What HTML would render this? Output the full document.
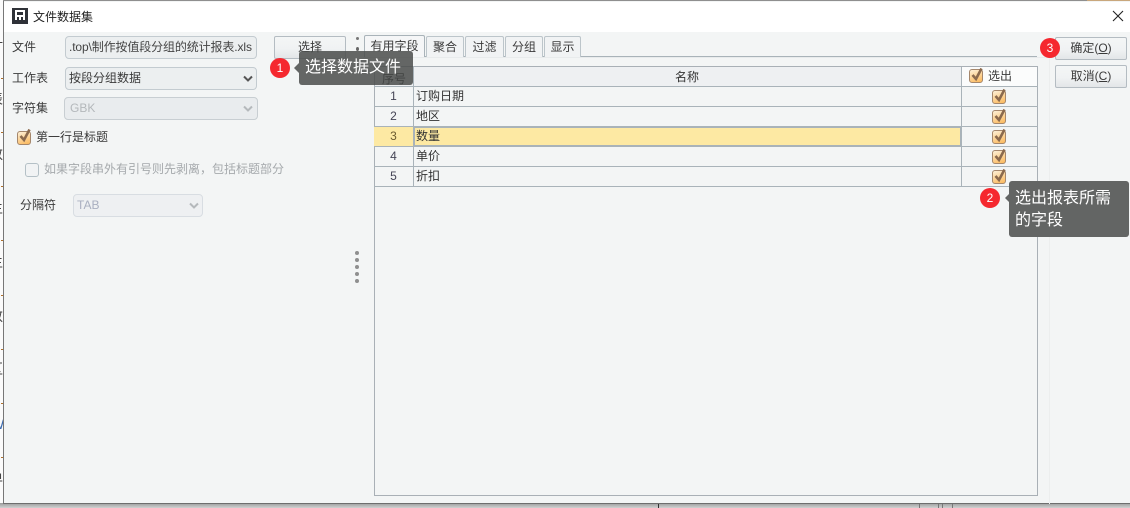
<!DOCTYPE html>
<html><head><meta charset="utf-8"><style>
*{box-sizing:border-box}
html,body{margin:0;padding:0;width:1130px;height:508px;overflow:hidden;background:#c9cbcb}
body{position:relative;font-family:"Liberation Sans","Noto Sans CJK SC",sans-serif;font-size:12px;color:#333}
.a{position:absolute;white-space:nowrap}
.lbl{font-size:12px;line-height:16px;color:#3a3a3a}
.in{position:absolute;border:1px solid #c3cbd0;border-radius:4px;background:#eceff0;height:23px;line-height:21px;padding-left:3px;font-size:12px;color:#3a3a3a;white-space:nowrap;overflow:hidden}
.dis{color:#b4b8bb;border-color:#d2d8dc;background:#eff1f2}
.btn{position:absolute;border:1px solid #b4bcc2;border-radius:2px;background:linear-gradient(#f4f6f6,#f0f2f3 55%,#e3e6e8);text-align:center;font-size:12px;color:#3a3a3a;line-height:20px}
.tab{position:absolute;top:36px;height:21px;border:1px solid #bcc5ca;border-bottom:0;border-radius:2px 2px 0 0;background:#f1f3f4;text-align:center;line-height:20px;font-size:12px;color:#3a3a3a}
.h{position:absolute;background:#a9b3b9;height:1px}
.v{position:absolute;background:#a9b3b9;width:1px}
.num{position:absolute;left:374px;width:39px;height:19px;text-align:center;line-height:19px;font-size:12px;color:#445}
.nm{position:absolute;left:416px;height:19px;line-height:19px;font-size:12px;color:#333}
.tip{position:absolute;background:#636564;border-radius:3px;color:#fff;font-size:16px;line-height:22px}
.dot{position:absolute;width:20px;height:20px;border-radius:50%;background:#f5282f;color:#fff;text-align:center;font-size:12px;line-height:20px}
.ar{position:absolute;width:0;height:0;border:5px solid transparent;border-right-color:#636564;border-left:0}
.gd{position:absolute;left:355px;width:4px;height:4px;border-radius:50%;background:#8f8f8f}
.cb{position:absolute;width:14px;height:14px;border:1px solid #a5876c;border-radius:3px;background:linear-gradient(160deg,#fdf0d8,#fbb85a)}
.frag{position:absolute;left:-11px;font-size:14px;line-height:16px;color:#444}
.tick{position:absolute;left:1px;width:2px;height:1px;background:#b0702a}
svg{position:absolute;overflow:visible}
</style></head><body>
<div class="a" style="left:0;top:0;width:1130px;height:2px;background:#8f8f8f"></div>
<div class="a" style="left:1087px;top:0;width:43px;height:2px;background:#c9a77c"></div>
<div class="a" style="left:0;top:503px;width:1130px;height:5px;background:linear-gradient(#9a9a9a,#d0d2d2)"></div>
<div class="a" style="left:658px;top:504px;width:1px;height:4px;background:#333"></div>
<div class="a" style="left:919px;top:504px;width:1px;height:4px;background:#777"></div>
<div class="a" style="left:938px;top:504px;width:1px;height:4px;background:#777"></div>
<div class="a" style="left:942px;top:504px;width:1px;height:4px;background:#777"></div>
<div class="a" style="left:952px;top:504px;width:1px;height:4px;background:#777"></div>
<div class="a" style="left:0;top:0;width:3px;height:503px;background:#fbfbfb;overflow:hidden">
<div class="frag" style="top:40px">订</div>
<div class="frag" style="top:91px">表</div>
<div class="frag" style="top:146px">数</div>
<div class="frag" style="top:200px">主</div>
<div class="frag" style="top:254px">主</div>
<div class="frag" style="top:308px">数</div>
<div class="frag" style="top:361px">区</div>
<div class="frag" style="top:416px;left:-9px;color:#3a6ab0">W</div>
<div class="frag" style="top:470px">单</div>
<div class="tick" style="top:78px"></div><div class="tick" style="top:132px"></div><div class="tick" style="top:186px"></div><div class="tick" style="top:240px"></div><div class="tick" style="top:295px"></div><div class="tick" style="top:349px"></div><div class="tick" style="top:403px"></div><div class="tick" style="top:457px"></div>
</div>
<div class="a" style="left:3px;top:1px;width:1127px;height:503px;background:#f3f5f5;border-left:1px solid #777;border-bottom:1px solid #6e6e6e"></div>
<div class="a" style="left:4px;top:2px;width:1126px;height:30px;background:#fff"></div>

<div class="a" style="left:12px;top:8px;width:16px;height:16px;background:#2f3238"></div>
<div class="a" style="left:15px;top:10px;width:10px;height:10px;background:#fff"></div>
<div class="a" style="left:17px;top:12px;width:6px;height:3px;background:#2f3238"></div>
<div class="a" style="left:17px;top:17px;width:2px;height:3px;background:#2f3238"></div>
<div class="a" style="left:21px;top:17px;width:2px;height:3px;background:#2f3238"></div>
<div class="a" style="left:33px;top:9px;font-size:12px;line-height:16px;color:#222">文件数据集</div>
<svg style="left:1112px;top:10px" width="12" height="12" viewBox="0 0 12 12"><path d="M1 1L11 11M11 1L1 11" stroke="#222" stroke-width="1.1" fill="none"/></svg>

<div class="a lbl" style="left:12px;top:39px">文件</div>
<div class="in" style="left:65px;top:36px;width:192px;color:#444;padding-left:3px;letter-spacing:-.12px">.top\制作按值段分组的统计报表.xls</div>
<div class="a lbl" style="left:12px;top:70px">工作表</div>
<div class="in" style="left:65px;top:67px;width:192px">按段分组数据</div>
<svg style="left:243px;top:75px" width="10" height="8"><path d="M1 1.5L5 5.5L9 1.5" stroke="#555" stroke-width="2" fill="none"/></svg>
<div class="a lbl" style="left:12px;top:100px">字符集</div>
<div class="in dis" style="left:64px;top:97px;width:194px;padding-left:5px;background:#e9ecee;border-color:#c8ced2">GBK</div>
<svg style="left:243px;top:105px" width="10" height="8"><path d="M1 1.5L5 5.5L9 1.5" stroke="#b5b9bc" stroke-width="2" fill="none"/></svg>

<div class="cb" style="left:17px;top:131px"></div>
<svg style="left:18px;top:128px" width="14" height="15"><path d="M2.5 8L6 12L11.5 1.5" stroke="#8b6a4e" stroke-width="2.6" fill="none"/></svg>
<div class="a lbl" style="left:36px;top:129px">第一行是标题</div>
<div class="a" style="left:25px;top:163px;width:14px;height:14px;border:1px solid #b4c0c6;border-radius:3px;background:#f1f3f4"></div>
<div class="a lbl" style="left:44px;top:161px;color:#a5a9ac">如果字段串外有引号则先剥离，包括标题部分</div>
<div class="a lbl" style="left:20px;top:197px">分隔符</div>
<div class="in dis" style="left:73px;top:194px;width:130px;padding-left:3px;background:#eef0f2;border-color:#d8dde2;color:#a9afc0">TAB</div>
<svg style="left:189px;top:202px" width="10" height="8"><path d="M1 1.5L5 5.5L9 1.5" stroke="#b5b9bc" stroke-width="2" fill="none"/></svg>

<div class="gd" style="top:251px"></div><div class="gd" style="top:258px"></div><div class="gd" style="top:265px"></div><div class="gd" style="top:272px"></div><div class="gd" style="top:279px"></div>
<div class="gd" style="left:356px;top:37px;width:3px;height:3px;background:#777"></div>
<div class="gd" style="left:356px;top:47px;width:3px;height:4px;background:#666"></div>

<div class="btn" style="left:274px;top:36px;width:72px;height:23px">选择</div>

<div class="h" style="left:364px;top:56px;width:673px"></div>
<div class="v" style="left:1049px;top:58px;height:446px;background:#eceeee"></div>
<div class="a" style="left:363px;top:57px;width:687px;height:1px;background:#e8ebec"></div>
<div class="tab" style="left:364px;width:61px;height:22px;top:35px;background:#f5f6f7;border-color:#a9b3b9;z-index:2">有用字段</div>
<div class="tab" style="left:426px;width:38px">聚合</div>
<div class="tab" style="left:465px;width:39px">过滤</div>
<div class="tab" style="left:505px;width:38px">分组</div>
<div class="tab" style="left:544px;width:37px">显示</div>

<div class="a" style="left:374px;top:66px;width:664px;height:430px;border:1px solid #a9b0b6;background:#f3f5f5"></div>
<div class="a" style="left:375px;top:67px;width:662px;height:19px;background:#eef0f2"></div>
<div class="a" style="left:962px;top:67px;width:75px;height:19px;background:#fbfcfc"></div>
<div class="a" style="left:374px;top:127px;width:39px;height:20px;background:#fde9a3"></div>
<div class="a" style="left:414px;top:128px;width:547px;height:18px;background:#fde9a3"></div>
<div class="h" style="left:374px;top:86px;width:664px"></div>
<div class="h" style="left:374px;top:106px;width:664px"></div>
<div class="h" style="left:374px;top:126px;width:664px"></div>
<div class="h" style="left:374px;top:146px;width:664px"></div>
<div class="h" style="left:374px;top:166px;width:664px"></div>
<div class="h" style="left:374px;top:186px;width:664px"></div>
<div class="v" style="left:413px;top:67px;height:120px"></div>
<div class="v" style="left:961px;top:67px;height:120px"></div>
<div class="a" style="left:413px;top:126px;width:549px;height:21px;border:2px solid #a9b3b9"></div>

<div class="a lbl" style="left:382px;top:71px;color:#111">序号</div>
<div class="a lbl" style="left:675px;top:69px;color:#333">名称</div>
<div class="cb" style="left:969px;top:69px"></div>
<svg style="left:970px;top:67px" width="14" height="15"><path d="M2.5 8L6 12L11.5 1.5" stroke="#8b6a4e" stroke-width="2.6" fill="none"/></svg>
<div class="a lbl" style="left:988px;top:68px">选出</div>

<div class="num" style="top:87px">1</div><div class="nm" style="top:87px">订购日期</div>
<div class="num" style="top:107px">2</div><div class="nm" style="top:107px">地区</div>
<div class="num" style="top:127px;color:#6b5b30">3</div><div class="nm" style="top:127px">数量</div>
<div class="num" style="top:147px">4</div><div class="nm" style="top:147px">单价</div>
<div class="num" style="top:167px">5</div><div class="nm" style="top:167px">折扣</div>

<div class="cb" style="left:992px;top:90px"></div>
<svg style="left:993px;top:88px" width="14" height="15"><path d="M2.5 8L6 12L11.5 1.5" stroke="#8b6a4e" stroke-width="2.6" fill="none"/></svg>
<div class="cb" style="left:992px;top:110px"></div>
<svg style="left:993px;top:108px" width="14" height="15"><path d="M2.5 8L6 12L11.5 1.5" stroke="#8b6a4e" stroke-width="2.6" fill="none"/></svg>
<div class="cb" style="left:992px;top:130px"></div>
<svg style="left:993px;top:128px" width="14" height="15"><path d="M2.5 8L6 12L11.5 1.5" stroke="#8b6a4e" stroke-width="2.6" fill="none"/></svg>
<div class="cb" style="left:992px;top:150px"></div>
<svg style="left:993px;top:148px" width="14" height="15"><path d="M2.5 8L6 12L11.5 1.5" stroke="#8b6a4e" stroke-width="2.6" fill="none"/></svg>
<div class="cb" style="left:992px;top:170px"></div>
<svg style="left:993px;top:168px" width="14" height="15"><path d="M2.5 8L6 12L11.5 1.5" stroke="#8b6a4e" stroke-width="2.6" fill="none"/></svg>

<div class="btn" style="left:1055px;top:37px;width:72px;height:23px">确定(<span style="text-decoration:underline">O</span>)</div>
<div class="btn" style="left:1055px;top:65px;width:72px;height:23px">取消(<span style="text-decoration:underline">C</span>)</div>

<div class="tip" style="left:299px;top:51px;width:114px;height:34px;padding:6px 0 0 6px;background:rgba(74,76,75,.85);z-index:5">选择数据文件</div>
<div class="ar" style="left:294px;top:63px;z-index:5"></div>
<div class="dot" style="left:270px;top:58px;z-index:5">1</div>
<div class="tip" style="left:1009px;top:181px;width:120px;height:56px;padding:7px 0 0 6px;z-index:5">选出报表所需<br>的字段</div>
<div class="ar" style="left:1005px;top:193px;z-index:5"></div>
<div class="dot" style="left:980px;top:188px;z-index:5">2</div>
<div class="dot" style="left:1040px;top:38px;z-index:5">3</div>
</body></html>
